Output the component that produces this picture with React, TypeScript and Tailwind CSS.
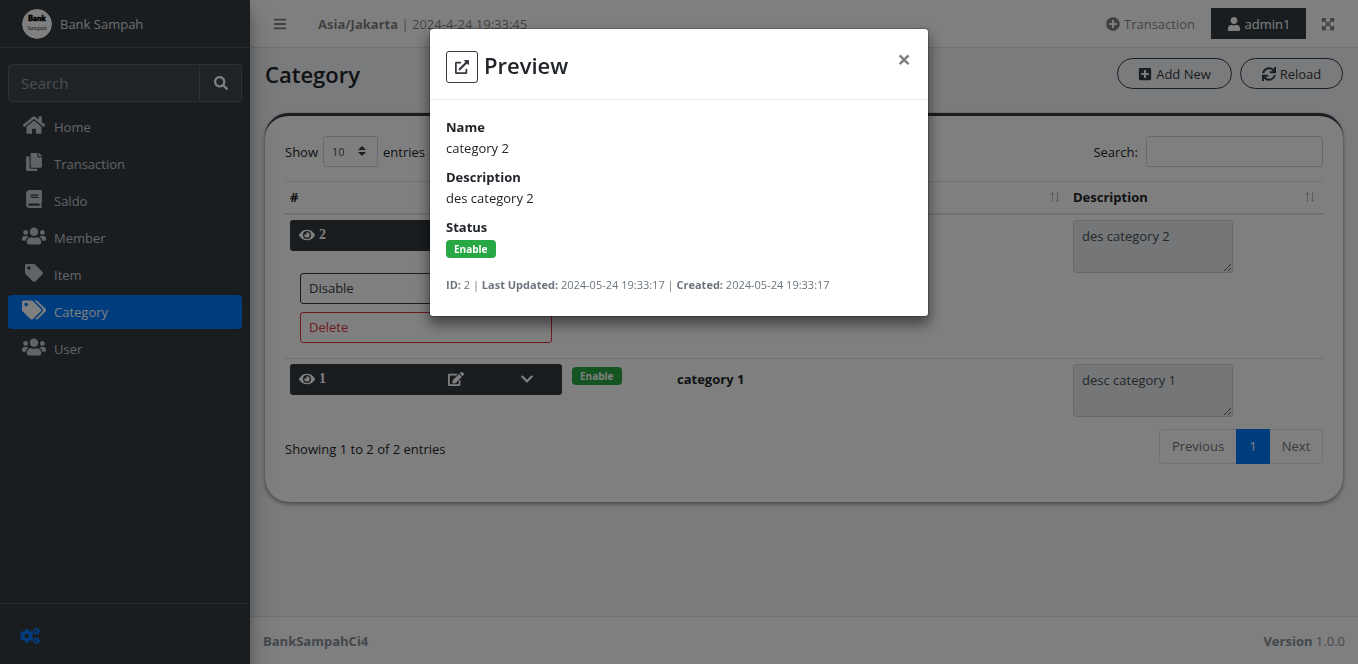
import { useState, type FC, type ReactNode } from "react";
import type { IconType } from "react-icons";
import {
  FaBars,
  FaBook,
  FaChevronDown,
  FaCogs,
  FaCopy,
  FaEdit,
  FaExpandArrowsAlt,
  FaExternalLinkAlt,
  FaEye,
  FaHome,
  FaPlusCircle,
  FaPlusSquare,
  FaSearch,
  FaSync,
  FaTag,
  FaTags,
  FaUser,
  FaUsers,
} from "react-icons/fa";

interface Category {
  id: number;
  name: string;
  description: string;
  date: string;
}

const categories: Category[] = [
  { id: 2, name: "category 2", description: "des category 2", date: "2024-05-24 19:33:17" },
  { id: 1, name: "category 1", description: "desc category 1", date: "2024-05-24 19:33:17" },
];

const menu: { label: string; icon: IconType }[] = [
  { label: "Home", icon: FaHome },
  { label: "Transaction", icon: FaCopy },
  { label: "Saldo", icon: FaBook },
  { label: "Member", icon: FaUsers },
  { label: "Item", icon: FaTag },
  { label: "Category", icon: FaTags },
  { label: "User", icon: FaUsers },
];

// these glyphs are wider than they are tall
const wideIcons = [FaHome, FaUsers, FaTags];

const Logo = () => (
  <svg viewBox="0 0 30 30" className="size-[30px] rounded-full" aria-hidden="true">
    <circle cx="15" cy="15" r="15" fill="#fff" />
    <text x="15" y="12" textAnchor="middle" fontSize="7" fontWeight="900" fontFamily="Inter, sans-serif" stroke="#000" strokeWidth=".3">
      Bank
    </text>
    <text x="15" y="21" textAnchor="middle" fontSize="6" fontStyle="italic" fontFamily="Liberation Serif, serif" fill="#3a1818">
      Sampah
    </text>
  </svg>
);

const SortIcon = () => (
  <svg viewBox="0 0 10 12" className="h-3 w-2.5 opacity-30" fill="none" stroke="currentColor" aria-hidden="true">
    <path d="M2.5 11V1.5M.8 3.5l1.7-2 1.7 2M7.5 1v9.500M5.800 8.500l1.700 2 1.700-2" />
  </svg>
);

const Badge = () => (
  <span className="flex h-[18px] w-fit items-center rounded bg-[#28a745] px-2 text-[10px] font-bold text-white">
    Enable
  </span>
);

const Sidebar = () => (
  <aside className="z-10 flex w-[250px] shrink-0 flex-col bg-[#343a40] text-[#c2c7d0] shadow-[0_14px_28px_rgba(0,0,0,0.25),0_10px_10px_rgba(0,0,0,0.22)]">
    <a href="#" className="flex h-12 items-center gap-2 border-b border-[#4b545c] pl-[22px] text-white/80">
      <Logo />
      <span>Bank Sampah</span>
    </a>
    <div className="flex flex-1 flex-col px-2 pt-4">
      <form className="mb-2 flex h-[38px]">
        <input
          type="search"
          aria-label="Search menu"
          placeholder="Search"
          className="min-w-0 flex-1 rounded-l border border-[#56606a] bg-[#3f474e] px-3 text-[15px] placeholder:text-[#939ba2]"
        />
        <button
          type="button"
          aria-label="Search"
          className="flex w-[42px] items-center justify-center rounded-r border border-l-0 border-[#56606a] bg-[#3f474e] text-white"
        >
          <FaSearch className="size-3.5" />
        </button>
      </form>
      <nav className="flex flex-col gap-[3px]">
        {menu.map(({ label, icon: Icon }) => (
          <a
            key={label}
            href="#"
            className={
              label === "Category"
                ? "flex h-[34px] items-center gap-2 rounded bg-[#007bff] px-3.5 text-white"
                : "flex h-[34px] items-center gap-2 rounded px-3.5"
            }
          >
            <span className="flex w-6 justify-center pb-1">
              <Icon className={wideIcons.includes(Icon) ? "h-5 w-6" : "size-[18px]"} />
            </span>
            {label}
          </a>
        ))}
      </nav>
    </div>
    <div className="flex h-[61px] items-center border-t border-[#4b545c] px-5 pt-1">
      <a href="#" aria-label="Settings" className="text-[#007bff]">
        <FaCogs className="h-4 w-5" />
      </a>
    </div>
  </aside>
);

const Navbar = () => (
  <header className="flex h-12 items-center border-b border-[#dee2e6] bg-white text-black/50">
    <button type="button" aria-label="Toggle sidebar" className="px-[23px]">
      <FaBars className="size-3.5" />
    </button>
    <p className="ml-2">
      <b className="font-bold">Asia/Jakarta</b> | 2024-4-24 19:33:45
    </p>
    <div className="ml-auto flex items-center pr-[23px]">
      <a href="#" className="mr-4 flex items-center gap-1">
        <FaPlusCircle className="size-3.5" />
        Transaction
      </a>
      <button type="button" className="mr-[15px] flex h-[31px] w-[95px] items-center justify-center gap-1 bg-[#343a40] text-white">
        <FaUser className="size-3.5" />
        admin1
      </button>
      <button type="button" aria-label="Fullscreen">
        <FaExpandArrowsAlt className="size-3.5" />
      </button>
    </div>
  </header>
);

interface CategoryRowProps {
  data: Category;
  expanded: boolean;
  onPreview: () => void;
  onToggle: () => void;
}

const CategoryRow: FC<CategoryRowProps> = ({ data, expanded, onPreview, onToggle }) => (
  <tr className="border-t border-[#dee2e6] align-top">
    <td className="px-[5px] pt-[5px] pb-1">
      <div className="flex h-[31px] rounded-[3px] bg-[#343a40] text-white">
        <button
          type="button"
          onClick={onPreview}
          className="flex flex-1 items-center gap-1 pl-[9px] font-['Liberation_Serif',serif] text-sm font-bold"
        >
          <FaEye className="size-4" />
          {data.id}
        </button>
        <button type="button" aria-label="Edit" className="flex w-[70px] items-center justify-center">
          <FaEdit className="size-4" />
        </button>
        <button
          type="button"
          aria-label="More actions"
          aria-expanded={expanded}
          onClick={onToggle}
          className="flex w-[71px] items-center justify-center"
        >
          <FaChevronDown className="size-3.5" />
        </button>
      </div>
      {expanded && (
        <div className="flex flex-col gap-2 px-2.5 pt-[22px] pb-[11px]">
          <button type="button" className="h-[31px] rounded-[3px] border border-[#343a40] px-2 text-left text-[#343a40]">
            Disable
          </button>
          <button type="button" className="h-[31px] rounded-[3px] border border-[#dc3545] px-2 text-left text-[#dc3545]">
            Delete
          </button>
        </div>
      )}
    </td>
    <td className="px-[5px] pt-2">
      <Badge />
    </td>
    <td className="px-[5px] pt-2.5 font-bold">{data.name}</td>
    <td className="px-[5px] pt-[5px] pb-1">
      <textarea
        readOnly
        aria-label={`Description of ${data.name}`}
        defaultValue={data.description}
        className="block h-[53px] w-40 rounded-[3px] border border-[#ced4da] bg-[#e9ecef] px-2 py-[5px] text-[#495057]"
      />
    </td>
  </tr>
);

const Th: FC<{ children: ReactNode }> = ({ children }) => (
  <th className="px-[5px] text-left font-bold">
    <div className="flex items-center justify-between pr-[3px]">
      {children}
      <SortIcon />
    </div>
  </th>
);

const CategoryCard: FC<{ onPreview: (data: Category) => void }> = ({ onPreview }) => {
  const [expandedId, setExpandedId] = useState<number | null>(2);

  return (
    <section className="rounded-3xl border-t-[3px] border-[#343a40] bg-white px-5 pt-5 pb-[38px] shadow-[0_0_1px_rgba(0,0,0,0.4),0_2px_4px_rgba(0,0,0,0.4)]">
      <div className="mb-3.5 flex items-center justify-between">
        <label className="flex items-center gap-[5px]">
          Show
          <span className="relative">
            <select className="h-[31px] w-[55px] appearance-none rounded-[3px] border border-[#ced4da] bg-white px-2 text-[11px] text-[#495057]">
              <option>10</option>
              <option>25</option>
              <option>50</option>
            </select>
            <svg viewBox="0 0 8 10" className="pointer-events-none absolute top-2.5 right-3 h-2.5 w-2" fill="#343a40">
              <path d="M4 0l4 4H0zM4 10L0 6h8z" />
            </svg>
          </span>
          entries
        </label>
        <label className="flex items-center gap-2">
          Search:
          <input type="search" className="h-[31px] w-[177px] rounded-[3px] border border-[#ced4da] bg-white px-2" />
        </label>
      </div>
      <table className="w-full table-fixed border-collapse">
        <colgroup>
          <col className="w-[282px]" />
          <col className="w-[105px]" />
          <col />
          <col className="w-[255px]" />
        </colgroup>
        <thead>
          <tr className="h-8 border-t border-b-2 border-[#dee2e6]">
            <Th>#</Th>
            <Th>Status</Th>
            <Th>Name</Th>
            <Th>Description</Th>
          </tr>
        </thead>
        <tbody>
          {categories.map((category) => (
            <CategoryRow
              key={category.id}
              data={category}
              expanded={expandedId === category.id}
              onPreview={() => onPreview(category)}
              onToggle={() => setExpandedId(expandedId === category.id ? null : category.id)}
            />
          ))}
        </tbody>
      </table>
      <div className="mt-2 flex items-center justify-between">
        <p className="pt-1.5">Showing 1 to 2 of 2 entries</p>
        <nav aria-label="Pagination" className="flex h-[35px] text-[#6c757d]">
          <button type="button" className="w-[77px] rounded-l border border-r-0 border-[#dee2e6]">
            Previous
          </button>
          <button type="button" className="w-[34px] bg-[#007bff] text-white">
            1
          </button>
          <button type="button" className="w-[53px] rounded-r border border-l-0 border-[#dee2e6]">
            Next
          </button>
        </nav>
      </div>
    </section>
  );
};

const PreviewModal: FC<{ data: Category; onClose: () => void }> = ({ data, onClose }) => (
  <div className="fixed inset-0 z-20 flex items-start justify-center bg-black/50 pt-7">
    <div
      role="dialog"
      aria-modal="true"
      aria-labelledby="preview-title"
      className="w-[500px] rounded border border-black/20 bg-white bg-clip-padding shadow-[0_7px_14px_rgba(0,0,0,0.5)]"
    >
      <div className="flex h-[71px] items-start justify-between border-b border-[#e9ecef] px-4">
        <div className="flex items-center gap-1.5 pt-[22px]">
          <button
            type="button"
            aria-label="Open in new page"
            className="flex size-8 items-center justify-center rounded-[3px] border border-[#343a40] text-[#343a40]"
          >
            <FaExternalLinkAlt className="size-3.5" />
          </button>
          <h4 id="preview-title" className="pb-1 text-[22px] leading-7 font-semibold">
            Preview
          </h4>
        </div>
        <button type="button" aria-label="Close" onClick={onClose} className="pt-4 pr-px text-2xl leading-7 font-bold text-black/50">
          ×
        </button>
      </div>
      <div className="px-4 pt-[17px] pb-[21px]">
        <dl className="leading-[21px]">
          <dt className="font-bold">Name</dt>
          <dd className="mb-2">{data.name}</dd>
          <dt className="font-bold">Description</dt>
          <dd className="mb-2">{data.description}</dd>
          <dt className="font-bold">Status</dt>
          <dd className="mb-3.5 flex h-[22px] items-center">
            <Badge />
          </dd>
        </dl>
        <p className="text-[11px] leading-[21px] text-[#6c757d]">
          <b>ID:</b> {data.id} | <b>Last Updated:</b> {data.date} | <b>Created:</b> {data.date}
        </p>
      </div>
    </div>
  </div>
);

export default function App() {
  const [preview, setPreview] = useState<Category | null>(categories[0]);

  return (
    <div className="flex min-h-screen bg-[#f4f6f9] font-['Open_Sans','Noto_Sans',sans-serif] text-[13px] leading-5 text-[#212529]">
      <Sidebar />
      <div className="flex min-w-0 flex-1 flex-col">
        <Navbar />
        <main className="flex-1 px-[15px] pt-2.5">
          <div className="mb-6 flex h-[31px] items-center justify-between">
            <h1 className="text-[22px] leading-7 font-semibold">Category</h1>
            <div className="flex gap-2">
              <button
                type="button"
                className="flex h-[31px] w-[115px] items-center justify-center gap-1 rounded-full border border-[#343a40] text-[#343a40]"
              >
                <FaPlusSquare className="size-3.5" />
                Add New
              </button>
              <button
                type="button"
                className="flex h-[31px] w-[103px] items-center justify-center gap-1 rounded-full border border-[#343a40] text-[#343a40]"
              >
                <FaSync className="size-3.5" />
                Reload
              </button>
            </div>
          </div>
          <CategoryCard onPreview={setPreview} />
        </main>
        <footer className="flex h-12 items-center justify-between border-t border-[#dee2e6] bg-white px-[13px] text-[#869099]">
          <b>BankSampahCi4</b>
          <p>
            <b>Version</b> 1.0.0
          </p>
        </footer>
      </div>
      {preview && <PreviewModal data={preview} onClose={() => setPreview(null)} />}
    </div>
  );
}
